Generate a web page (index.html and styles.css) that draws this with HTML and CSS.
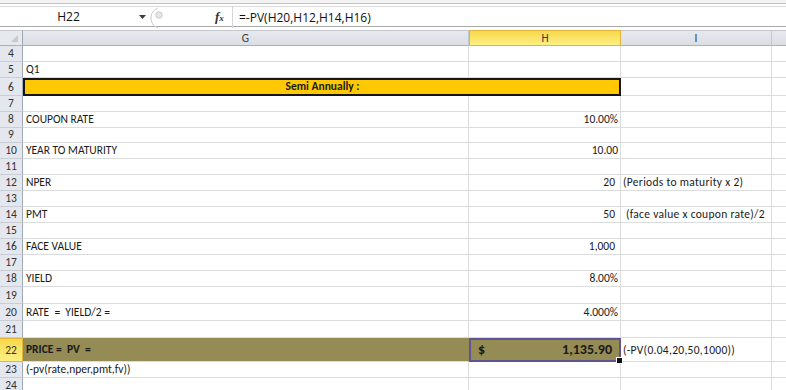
FILE: index.html
```html
<!DOCTYPE html>
<html>
<head>
<meta charset="utf-8">
<link rel="stylesheet" href="styles.css">
</head>
<body>
<div class="topstrip"></div>
<div class="fbar">
  <div class="fbar-inner">
    <div class="namebox">H22</div>
    <div class="nb-arrow"><svg width="7" height="4" viewBox="0 0 7 4"><path d="M0 0H7L3.5 4Z" fill="#3c3c3c"/></svg></div>
    <div class="splitter"><svg width="18" height="22" viewBox="0 0 18 22"><path d="M9 1C4 3 2 7 2 11C2 15 4 19 9 21" fill="none" stroke="#c9c9c9" stroke-width="1"/><circle cx="10" cy="8" r="3.2" fill="#e6e6e6" stroke="#c2c2c2" stroke-width="0.8"/></svg></div>
    <div class="fx"><i>f</i><span class="x">x</span></div>
    <div class="fsep"></div>
    <div class="formula">=-PV(H20,H12,H14,H16)</div>
  </div>
</div>
<div class="gap"></div>
<div class="sheet">
  <div class="row hdr">
    <div class="rh corner"><svg width="7" height="7" viewBox="0 0 7 7"><path d="M7 0V7H0Z" fill="#c6cad0"/></svg></div>
    <div class="ch">G</div>
    <div class="ch sel">H</div>
    <div class="ch">I</div>
    <div class="ch last"></div>
  </div>

  <div class="row r16"><div class="rh">4</div><div class="c g"></div><div class="c h"></div><div class="c i"></div><div class="c j"></div></div>
  <div class="row r16"><div class="rh">5</div><div class="c g">Q1</div><div class="c h"></div><div class="c i"></div><div class="c j"></div></div>
  <div class="row r18"><div class="rh">6</div><div class="c gh band">Semi Annually :</div><div class="c i"></div><div class="c j"></div></div>
  <div class="row r16"><div class="rh">7</div><div class="c g"></div><div class="c h"></div><div class="c i"></div><div class="c j"></div></div>
  <div class="row r16"><div class="rh">8</div><div class="c g">COUPON RATE</div><div class="c h num">10.00%</div><div class="c i"></div><div class="c j"></div></div>
  <div class="row r15"><div class="rh">9</div><div class="c g"></div><div class="c h"></div><div class="c i"></div><div class="c j"></div></div>
  <div class="row r16"><div class="rh">10</div><div class="c g">YEAR TO MATURITY</div><div class="c h num">10.00</div><div class="c i"></div><div class="c j"></div></div>
  <div class="row r16"><div class="rh">11</div><div class="c g"></div><div class="c h"></div><div class="c i"></div><div class="c j"></div></div>
  <div class="row r16"><div class="rh">12</div><div class="c g">NPER</div><div class="c h num pad">20</div><div class="c i note">(Periods to maturity x 2)</div><div class="c j"></div></div>
  <div class="row r16"><div class="rh">13</div><div class="c g"></div><div class="c h"></div><div class="c i"></div><div class="c j"></div></div>
  <div class="row r16"><div class="rh">14</div><div class="c g">PMT</div><div class="c h num pad">50</div><div class="c i note">&nbsp;(face value x coupon rate)/2</div><div class="c j"></div></div>
  <div class="row r16"><div class="rh">15</div><div class="c g"></div><div class="c h"></div><div class="c i"></div><div class="c j"></div></div>
  <div class="row r16"><div class="rh">16</div><div class="c g">FACE VALUE</div><div class="c h num pad">1,000</div><div class="c i"></div><div class="c j"></div></div>
  <div class="row r16"><div class="rh">17</div><div class="c g"></div><div class="c h"></div><div class="c i"></div><div class="c j"></div></div>
  <div class="row r16"><div class="rh">18</div><div class="c g">YIELD</div><div class="c h num">8.00%</div><div class="c i"></div><div class="c j"></div></div>
  <div class="row r17"><div class="rh">19</div><div class="c g"></div><div class="c h"></div><div class="c i"></div><div class="c j"></div></div>
  <div class="row r17"><div class="rh">20</div><div class="c g">RATE&nbsp; =&nbsp; YIELD/2 =</div><div class="c h num">4.000%</div><div class="c i"></div><div class="c j"></div></div>
  <div class="row r17"><div class="rh">21</div><div class="c g"></div><div class="c h"></div><div class="c i"></div><div class="c j"></div></div>
  <div class="row r24"><div class="rh selrow">22</div><div class="c g olive b">PRICE =&nbsp; PV&nbsp; =</div><div class="c h olive active"><span class="dollar">$</span><span class="amt">1,135.90</span><span class="handle"></span></div><div class="c i note">(-PV(0.04,20,50,1000))</div><div class="c j"></div></div>
  <div class="row r16"><div class="rh">23</div><div class="c g">(-pv(rate,nper,pmt,fv))</div><div class="c h"></div><div class="c i"></div><div class="c j"></div></div>
  <div class="row r16"><div class="rh">24</div><div class="c g"></div><div class="c h"></div><div class="c i"></div><div class="c j"></div></div>
</div>
</body>
</html>
```
FILE: styles.css
```css
html, body {
  margin: 0;
  padding: 0;
  background: #fff;
}
body {
  width: 786px;
  height: 390px;
  overflow: hidden;
  font-family: "Carlito", Lato, "Liberation Sans", sans-serif;
  color: #111;
}
.topstrip {
  height: 3px;
  background: #f3f3f3;
}
.fbar {
  border-top: 1px solid #c3c3c3;
  border-bottom: 1px solid #a9a9a9;
  padding-top: 2px;
}
.fbar-inner {
  border-top: 1px solid #d9d9d9;
  height: 19px;
  display: flex;
  align-items: center;
  font-family: "Open Sans", "Noto Sans", sans-serif;
  font-size: 12px;
  color: #111;
}
.namebox {
  width: 133px;
  text-align: center;
  padding-left: 4px;
  box-sizing: border-box;
}
.nb-arrow {
  width: 16px;
  display: flex;
  justify-content: center;
  padding-left: 3px;
  box-sizing: border-box;
}
.splitter {
  width: 20px;
  display: flex;
  align-items: center;
  height: 22px;
  margin-top: 2px;
}
.fx {
  margin-left: 46px;
  width: 17px;
  font-family: "Liberation Serif", serif;
  font-size: 13px;
  font-weight: bold;
  color: #333;
}
.fx .x {
  font-size: 9px;
  font-style: italic;
}
.fsep {
  width: 1px;
  height: 22px;
  background: #d6d6d6;
  margin-right: 6px;
}
.formula {
  padding-top: 1px;
}
.gap {
  height: 3px;
}
.sheet {
  display: flex;
  flex-direction: column;
}
.row {
  display: grid;
  grid-template-columns: 23px 446px 152px 151px 14px;
}
.hdr { height: 16px; }
.r15 { height: 15px; }
.r16 { height: 16px; }
.r17 { height: 17px; }
.r18 { height: 18px; }
.r24 { height: 24px; }

.rh, .ch, .c {
  box-sizing: border-box;
  font-size: 11.5px;
  line-height: 13px;
  white-space: nowrap;
  overflow: visible;
}
.ch {
  background: linear-gradient(#e6e9ee, #dbdfe5);
  border-top: 1px solid #c5c8cc;
  border-bottom: 1px solid #a7b0bc;
  border-right: 1px solid #c1c7cf;
  color: #3a3a3a;
  text-align: center;
  line-height: 14px;
}
.ch.sel {
  background: linear-gradient(#f8d84a, #fdef84);
  border: 1px solid #e0b53a;
  color: #3a3a3a;
}
.ch.last { border-right: none; }
.rh {
  background: #e4e8ee;
  border-right: 1px solid #9ea9b7;
  border-bottom: 1px solid #c9ced6;
  color: #333;
  text-align: center;
  display: flex;
  align-items: flex-end;
  justify-content: center;
  padding-bottom: 1px;
}
.rh.corner {
  background: #e6e9ee;
  border-top: 1px solid #c5c8cc;
  border-bottom: 1px solid #a7b0bc;
  justify-content: flex-end;
  align-items: flex-end;
  padding: 0 4px 3px 0;
}
.rh.selrow {
  background: linear-gradient(#f8d84a, #fdef84);
  border-bottom: 1px solid #e0b53a;
  border-top: 1px solid #e0b53a;
  border-right-color: #e0b53a;
  padding-bottom: 4px;
}
.c {
  border-right: 1px solid #dadcdd;
  border-bottom: 1px solid #dadcdd;
  display: flex;
  align-items: flex-end;
  padding: 0 2px 1px 3px;
  color: #1a1a1a;
}
.c.j { border-right: none; }
.c.i { padding-left: 2px; }
.note { letter-spacing: 0.3px; }
.num { justify-content: flex-end; }
.num.pad { padding-right: 5px; }
.gh {
  grid-column: 2 / 4;
}
.band {
  background: #ffc800;
  border: 2px solid #151515;
  justify-content: center;
  font-weight: bold;
  padding-bottom: 1px;
}
.olive {
  background: #948b55;
  border-right-color: #948b55;
  border-bottom-color: #dadcdd;
  padding-bottom: 4px;
}
.b { font-weight: bold; }
.active {
  position: relative;
  border: 2px solid #5f5492;
  font-weight: bold;
  font-size: 14px;
  line-height: 16px;
  justify-content: space-between;
  padding: 0 7px 2px 7px;
}
.handle {
  position: absolute;
  right: -4px;
  bottom: -4px;
  width: 5px;
  height: 5px;
  background: #111;
  border: 1px solid #fff;
}
.r24 .c.i {
  padding-bottom: 4px;
}
.r24 .c.g {
  padding-bottom: 5px;
}
```
